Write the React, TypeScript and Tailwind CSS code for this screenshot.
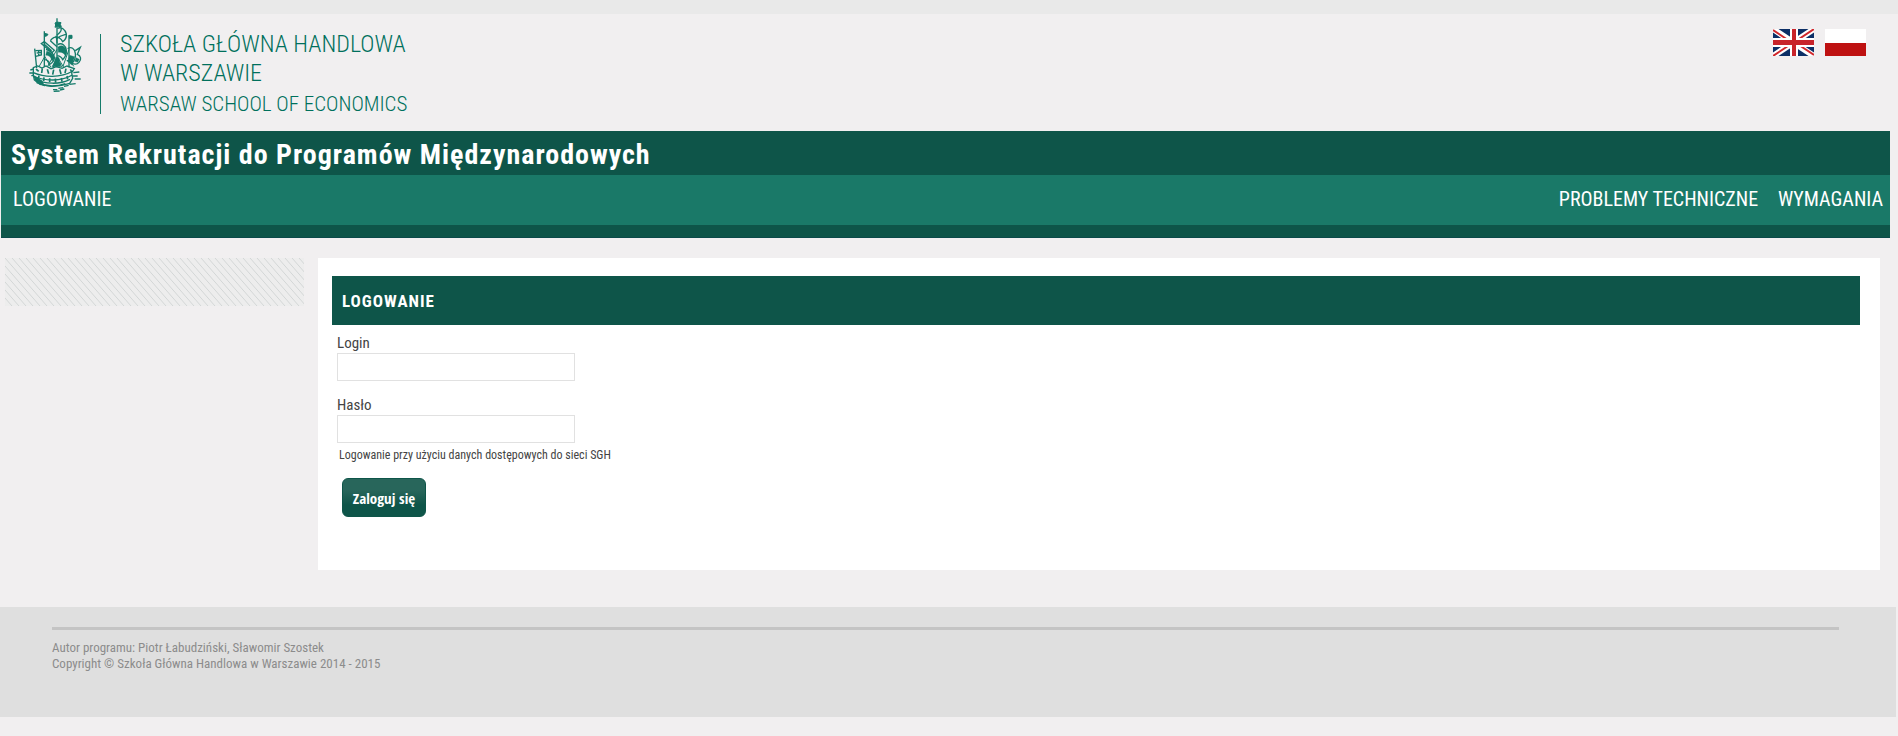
const navLinks = [
  { label: 'PROBLEMY TECHNICZNE', href: '#problemy' },
  { label: 'WYMAGANIA', href: '#wymagania' },
];

const Ship = () => (
  <svg viewBox="27 24 159 225" className="w-[53px] h-[75px]" fill="none" stroke="#157b6a" strokeWidth="4" aria-hidden="true">
    {/* masts and flags */}
    <path d="M111 25V172M73 64V170M147 76V172M44 116L50 174" />
    <path d="M105 39l6-3 12 2-2 5 3 7-12-1-7 3 2-7zM74 70l10 3-4 5-6 1zM148 76h8v9h-8z" fill="#157b6a" strokeWidth="3" />
    <path d="M46 122l18-1v14l-17 4M50 129l13-2M56 122v14" strokeWidth="4" />
    {/* sails */}
    <path d="M112 55c12-6 24 4 27 17 1 10-3 18-11 23-5-10-10-14-22-16M110 76c9-7 17-13 13-20M108 88c8-8 20-13 29-15" />
    <path d="M64 101l9-6 30 26-7 7zM71 101l24 21M91 92c7-9 14-13 19-9l1 17M91 92l20 18" />
    <path d="M78 118c12 4 24 12 25 25 0 11-7 16-15 21 1-9-4-13-13-15" />
    <path d="M80 124c14 2 22 11 23 22l-7 7c-4-13-9-17-19-17z" fill="#157b6a" strokeWidth="1" />
    <path d="M113 104c12-8 25 3 26 17 1 12-3 20-11 28-4-10-9-11-16-12" />
    <path d="M114 111c10-8 22-3 24 9v20c-6-11-14-15-23-13z" fill="#157b6a" strokeWidth="1" />
    <path d="M143 116c11-8 21 0 23 14 2 11-2 22-12 32-3-8-7-10-14-11M166 122l15-10-9 21c11 4 13 16 5 24-7 8-15 6-22 2" />
    <path d="M149 136l15 4-8 23-13-8zM169 143l9 5-5 9-9-3z" fill="#157b6a" strokeWidth="1" />
    {/* rigging */}
    <path d="M111 118l-28 51M112 142l-16 29M112 140l19 32M147 118l-18 51M147 146l14 23M73 142l-16 28M73 137l19 34M103 161l-4 14M120 159l5 13" strokeWidth="3" />
    <path d="M107 142l10 1 5 27h-23z" fill="#157b6a" strokeWidth="1" />
    {/* hull */}
    <path d="M40 173l13-5 13 6 12-6 15 8 16-6 17 5 15-7 22 8-8 12 3 17-9 15-24 6-31 3-34-6-17-13-3-16z" />
    <path d="M40 188c32 14 80 17 119-5M40 198c34 16 83 17 117-3M43 208c32 14 75 17 107 0M50 218c26 11 59 13 86 3" />
    <path d="M48 177l8 7M67 175l-2 14M82 178l4 13M101 179l-3 15M119 178l4 14M138 176l-3 13M151 178l4 7M57 197l-2 10M72 202l-1 11M89 205v11M106 206l1 12M124 204l2 11M141 198l2 10" strokeWidth="5" />
    <path d="M42 199l9 17 20 9-6-12z" fill="#157b6a" />
    {/* waves */}
    <path d="M31 180l10-3M28 189h13M34 197h8M160 188l18-2M158 198h15M164 207h18M132 229l14-3M148 223l19-2M115 235l15-2M99 239h13M101 244l18-1M120 240l13-3" />
  </svg>
);

const FlagUK = () => (
  <svg viewBox="0 0 41 27" className="w-[41px] h-[27px]" aria-hidden="true">
    <path fill="#0c2f66" d="M0 0h41v27H0z" />
    <path stroke="#fff" strokeWidth="6" d="M0 0l41 27M41 0L0 27" />
    <path stroke="#d0282c" strokeWidth="2" d="M0 1l18 12M41 0L23 12M0 27l18-12M41 26L23 14" />
    <path fill="#fff" d="M17 0h8v27h-8zM0 9h41v9H0z" />
    <path fill="#c8242a" d="M19 0h4v27h-4zM0 11h41v5H0z" />
  </svg>
);

const FlagPL = () => (
  <svg viewBox="0 0 41 27" className="w-[41px] h-[27px]" aria-hidden="true">
    <path fill="#fff" d="M0 0h41v14H0z" />
    <path fill="#be1111" d="M0 14h41v13H0z" />
  </svg>
);

const inputClass = 'block w-[238px] h-7 border border-[#e1e1e1] bg-white px-2 outline-none';

export default function App() {
  return (
    <div className="min-h-screen bg-[#f1eff0] font-['Roboto_Condensed','Liberation_Sans',sans-serif] text-[#444]">
      <div className="h-3.5 bg-[#e9e9e9]" />

      {/* Logo and language switch */}
      <header className="flex justify-between h-[117px] pl-[29px] pr-8">
        <a href="#start" className="flex pt-1">
          <Ship />
          <span className="w-px h-20 mt-4 ml-[18px] mr-[19px] bg-[#157b6a]" />
          <span className="flex flex-col pt-3 font-light text-2xl leading-[29px] text-[#00705c]">
            <span>SZKOŁA GŁÓWNA HANDLOWA</span>
            <span>W WARSZAWIE</span>
            <span className="text-[21px] leading-8">WARSAW SCHOOL OF ECONOMICS</span>
          </span>
        </a>
        <div className="flex items-start gap-[11px] pt-[15px]">
          <a href="#en" aria-label="English"><FlagUK /></a>
          <a href="#pl" aria-label="Polski"><FlagPL /></a>
        </div>
      </header>

      {/* Title and menu */}
      <div className="ml-px mr-2 border-b border-[#0b4a4a] bg-[#0e5549] pb-3 text-white">
        <h1 className="h-11 pl-2.5 pt-1 text-[28px] leading-10 font-bold tracking-[1px]">
          System Rekrutacji do Programów Międzynarodowych
        </h1>
        <nav className="flex justify-between h-[50px] bg-[#1a7968] pl-3 pr-[7px] text-xl leading-[48px]">
          <a href="#logowanie">LOGOWANIE</a>
          <div className="flex gap-5">
            {navLinks.map((link) => (
              <a key={link.href} href={link.href}>{link.label}</a>
            ))}
          </div>
        </nav>
      </div>

      <div className="flex items-start gap-3.5 pt-5 pl-[5px] pr-[18px]">
        <aside className="w-[299px] h-12 shrink-0 bg-[#ededed]">
          <svg className="w-full h-full" aria-hidden="true">
            <defs>
              <pattern id="stripes" width="7" height="8" patternUnits="userSpaceOnUse">
                <path d="M-7 -8L14 16M0 -8L14 8M-7 0L7 16" stroke="#d3d6d6" strokeWidth="1" />
              </pattern>
            </defs>
            <rect width="100%" height="100%" fill="url(#stripes)" />
          </svg>
        </aside>

        {/* Login form */}
        <main className="flex-1 bg-white pt-[18px] pb-[53px] pl-3.5 pr-5">
          <h2 className="h-[49px] bg-[#0e5549] pl-2.5 text-[17px] leading-[50px] font-bold tracking-[1px] text-white">
            LOGOWANIE
          </h2>
          <form className="pl-[5px] pt-2 text-[15px] leading-5" onSubmit={(e) => e.preventDefault()}>
            <label htmlFor="login" className="block">Login</label>
            <input id="login" type="text" className={inputClass} />
            <label htmlFor="password" className="block mt-3.5">Hasło</label>
            <input id="password" type="password" className={inputClass} />
            <p className="pl-0.5 pt-0.5 text-xs leading-5">Logowanie przy użyciu danych dostępowych do sieci SGH</p>
            <button
              type="submit"
              className="block mt-[13px] ml-[5px] w-[84px] h-[39px] rounded-md border border-[#0e5549] bg-linear-to-b from-[#28665b] from-30% to-[#0e5549] to-70% font-['Open_Sans_Condensed','Roboto_Condensed',sans-serif] text-[15px] font-bold whitespace-nowrap text-white"
            >
              Zaloguj się
            </button>
          </form>
        </main>
      </div>

      <footer className="mt-[37px] mr-0.5 h-[110px] bg-[#dfdfdf] pt-5 pl-[52px] pr-[57px] text-[13px] leading-4 text-[#8c8c8c]">
        <div className="border-t-3 border-[#c4c4c4] pt-2.5">
          <p>Autor programu: Piotr Łabudziński, Sławomir Szostek</p>
          <p>Copyright © Szkoła Główna Handlowa w Warszawie 2014 - 2015</p>
        </div>
      </footer>
    </div>
  );
}
